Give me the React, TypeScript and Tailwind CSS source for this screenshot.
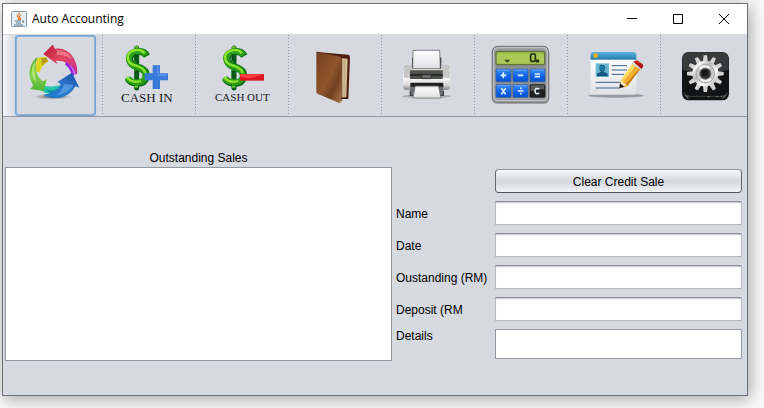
import type { ReactNode } from "react";

function Icon({ viewBox, children }: { viewBox: string; children: ReactNode }) {
  return (
    <svg viewBox={viewBox} className="size-[81px] shrink-0" aria-hidden="true">
      {children}
    </svg>
  );
}

function RefreshIcon() {
  return (
    <Icon viewBox="45 105 243 243">
      <defs>
        <linearGradient id="ringRed" x1="0" y1="0" x2="1" y2="1">
          <stop offset="0" stopColor="#b8143a" />
          <stop offset=".5" stopColor="#e2485f" />
          <stop offset="1" stopColor="#c8309a" />
        </linearGradient>
        <linearGradient id="ringGreen" x1="0" y1="0" x2="0" y2="1">
          <stop offset="0" stopColor="#4fa32c" />
          <stop offset=".5" stopColor="#86d348" />
          <stop offset="1" stopColor="#52b53a" />
        </linearGradient>
        <linearGradient id="ringBlue" x1="1" y1="0" x2="0" y2="1">
          <stop offset="0" stopColor="#1b4aa6" />
          <stop offset=".5" stopColor="#2c78cf" />
          <stop offset="1" stopColor="#1d7cc8" />
        </linearGradient>
        <radialGradient id="ringShadow">
          <stop offset="0" stopColor="#333" stopOpacity=".9" />
          <stop offset="1" stopColor="#666" stopOpacity="0" />
        </radialGradient>
      </defs>
      <g transform="translate(72 120)">
        <ellipse cx="86" cy="170" rx="58" ry="9" fill="url(#ringShadow)" />
        <path d="M38 58Q50 48 68 52L70 66Q52 76 47 98L34 92Z" fill="#dcd51e" />
        <path d="M52 54L68 53L72 64Q60 68 54 78Z" fill="#b99a14" />
        <path d="M124 64Q150 68 160 98L143 110Q142 88 124 74Z" fill="#9a22dc" />
        <path d="M134 72Q148 80 156 100L150 104Q146 86 134 72Z" fill="#c56af0" />
        <path d="M54 134Q74 144 106 136L106 160Q70 170 48 148Z" fill="#22c7ae" />
        <path d="M64 148Q84 156 106 144L106 160Q80 166 64 148Z" fill="#0f8f9c" />
        <path d="M86 14L93 26Q126 22 145 48Q160 70 160 96L157 105Q150 78 130 69Q112 61 96 62L100 73L58 42Z" fill="url(#ringRed)" />
        <path d="M98 29Q128 28 146 60Q124 42 98 46Z" fill="#f290a0" opacity=".65" />
        <path d="M42 50Q32 66 36 90Q40 112 56 124L68 118L60 153L18 147L28 137Q10 108 19 82Q26 60 42 50Z" fill="url(#ringGreen)" />
        <path d="M34 62Q18 84 27 114L38 128Q27 98 34 62Z" fill="#c4f48a" opacity=".75" />
        <path d="M144 98L166 143L154 139Q138 170 102 174Q76 175 58 164Q88 160 100 146Q108 138 110 132L100 126Z" fill="url(#ringBlue)" />
        <path d="M120 132L149 134Q134 160 96 167Q116 152 120 132Z" fill="#6db4f0" opacity=".5" />
      </g>
    </Icon>
  );
}

function DollarShape() {
  return (
    <>
      <path d="M37 6V126" stroke="#0a5c1c" strokeWidth="15" strokeLinecap="round" fill="none" />
      <path d="M32 8V124" stroke="#4fc423" strokeWidth="4" fill="none" />
      <path d="M68 30Q58 13 38 17Q12 24 17 44Q21 58 42 64Q70 73 65 95Q60 113 39 112Q18 111 11 98" fill="none" stroke="#0c6a1a" strokeWidth="21" />
      <path d="M65 28Q56 12 36 16Q9 23 14 43Q18 58 39 63Q67 72 63 93Q58 110 37 109Q16 108 9 95" fill="none" stroke="#2ba017" strokeWidth="17" />
      <path d="M61 22Q51 9 34 12Q5 19 11 41Q16 56 38 60Q60 67 63 82M50 105Q22 113 7 93" fill="none" stroke="#8be22f" strokeWidth="7" />
      <path d="M31 3H42M31 122H41" stroke="#79d827" strokeWidth="5" fill="none" />
      <path d="M33 24V45M33 74V98" stroke="#075415" strokeWidth="6" />
    </>
  );
}

function CashInIcon() {
  return (
    <Icon viewBox="324 105 243 243">
      <g transform="translate(373 138)">
        <DollarShape />
      </g>
      <path d="M458 196H480V220H504V241H480V267H458V241H434V220H458Z" fill="#3979d8" />
      <path d="M461 199H477V223H501V229H471V199Z" fill="#73a8f1" opacity=".5" />
      <text x="363" y="307" fontSize="39" fill="#17191d" className="font-['Liberation_Serif',serif]">CASH IN</text>
    </Icon>
  );
}

function CashOutIcon() {
  return (
    <Icon viewBox="33 15 243 243">
      <g transform="translate(95 48)">
        <DollarShape />
      </g>
      <path d="M150 132H222V152H150Z" fill="#de1820" />
      <path d="M151 133H221L178 145L151 140Z" fill="#ff5450" opacity=".7" />
      <text x="75" y="212" fontSize="33" fill="#17191d" className="font-['Liberation_Serif',serif]">CASH OUT</text>
    </Icon>
  );
}

function BookIcon() {
  return (
    <Icon viewBox="312 15 243 243">
      <defs>
        <linearGradient id="bookCover" x1="0" y1="0" x2="1" y2="1">
          <stop offset="0" stopColor="#75401f" />
          <stop offset=".5" stopColor="#91552d" />
          <stop offset=".7" stopColor="#70401f" />
          <stop offset="1" stopColor="#b1764c" />
        </linearGradient>
      </defs>
      <path d="M379 66L474 74Q480 75 480 82L475 207L453 207L440 80Z" fill="#4e1e0d" />
      <path d="M449 84L473 86L469 201L450 203Z" fill="#d4c197" />
      <path d="M458 86V201M464 87V200" stroke="#b79e70" strokeWidth="2" />
      <path d="M379 66L449 79Q455 80 455 88L453 215Q452 220 446 218L384 192Q379 190 379 185Z" fill="url(#bookCover)" />
      <path d="M380 66L450 79Q455 81 455 88V214" fill="none" stroke="#532713" strokeWidth="2" />
    </Icon>
  );
}

function PrinterIcon() {
  return (
    <Icon viewBox="51 15 243 243">
      <defs>
        <linearGradient id="printerBody" x1="0" y1="0" x2="0" y2="1">
          <stop offset="0" stopColor="#b4b4b4" />
          <stop offset=".35" stopColor="#f5f5f5" />
          <stop offset=".75" stopColor="#e5e5e5" />
          <stop offset="1" stopColor="#888" />
        </linearGradient>
        <linearGradient id="printerPaper" x1="0" y1="0" x2="0" y2="1">
          <stop offset="0" stopColor="#fff" />
          <stop offset="1" stopColor="#dfe0e3" />
        </linearGradient>
      </defs>
      <ellipse cx="170" cy="199" rx="74" ry="6" fill="#73777e" opacity=".45" />
      <path d="M126 83H214V118H126Z" fill="#414141" />
      <path d="M129 61H209L211 116H128Z" fill="url(#printerPaper)" stroke="#4c4c4c" strokeWidth="2" />
      <path d="M108 106H125V116H214V106H231Q240 108 240 119V174Q239 180 230 180H109Q99 179 99 171V119Q99 109 108 106Z" fill="url(#printerBody)" />
      <path d="M101 127L112 106H123V144H101ZM216 106H229L239 127V144H216Z" fill="#c6c6c6" />
      <path d="M99 143H240V151H99Z" fill="#f5f5f5" />
      <path d="M120 121H218V147H120Z" fill="#4d504d" />
      <path d="M120 132H218V138H120Z" fill="#252825" />
      <path d="M155 134H183V146H155Z" fill="#6a6d69" stroke="#242424" strokeWidth="2" />
      <path d="M121 158H220V172H121Z" fill="#202020" />
      <path d="M121 170H136L129 198H121ZM205 170H220V198H212Z" fill="#6b6e72" />
      <path d="M136 168H205L213 204H129Z" fill="url(#printerPaper)" stroke="#606060" strokeWidth="2" />
      <path d="M138 170H203" stroke="#a5a5a5" strokeWidth="3" />
      <path d="M121 182V196H130M220 182V196H211" stroke="#444" strokeWidth="4" fill="none" />
      <circle cx="232" cy="157" r="4" fill="#fff" stroke="#bbb" strokeWidth="2" />
    </Icon>
  );
}

function CalculatorIcon() {
  return (
    <Icon viewBox="330 15 243 243">
      <defs>
        <linearGradient id="calcKey" x1="0" y1="0" x2="0" y2="1">
          <stop offset="0" stopColor="#3f91ff" />
          <stop offset=".5" stopColor="#1467eb" />
          <stop offset="1" stopColor="#0552d4" />
        </linearGradient>
        <linearGradient id="calcScreen" x1="0" y1="0" x2="0" y2="1">
          <stop offset="0" stopColor="#88aa3e" />
          <stop offset=".5" stopColor="#b4d364" />
          <stop offset="1" stopColor="#9dbe50" />
        </linearGradient>
      </defs>
      <rect x="365" y="51" width="173" height="171" rx="16" fill="#707276" opacity=".5" />
      <rect x="367" y="49" width="169" height="168" rx="15" fill="#9c9ea1" stroke="#717376" strokeWidth="3" />
      <rect x="371" y="53" width="161" height="159" rx="11" fill="none" stroke="#c7c9cb" strokeWidth="3" />
      <rect x="376" y="62" width="151" height="142" rx="8" fill="#8b8f93" />
      <rect x="378" y="64" width="146" height="40" rx="5" fill="url(#calcScreen)" stroke="#65743d" strokeWidth="4" />
      <path d="M385 70H518V97H385Z" fill="#aaca57" />
      <path d="M403 89H421L412 98Z" fill="#344117" />
      <path d="M484 72H494L496 75V91L493 94H484L482 91V75ZM500 91H505V95H500Z" fill="none" stroke="#243210" strokeWidth="5" />
      {[
        [378, 117],
        [429, 117],
        [480, 117],
        [378, 164],
        [429, 164],
      ].map(([x, y]) => (
        <g key={`${x}-${y}`}>
          <rect x={x} y={y} width="45" height="38" rx="3" fill="url(#calcKey)" stroke="#315b9b" strokeWidth="2" />
          <path d={`M${x + 3} ${y + 3}H${x + 41}`} stroke="#74b2ff" strokeWidth="2" />
        </g>
      ))}
      <rect x="480" y="164" width="45" height="38" rx="3" fill="#222" stroke="#111" strokeWidth="2" />
      <path d="M482 166H523V178Q500 176 482 184Z" fill="#5d5d5d" />
      <g fill="none" stroke="#e1f0ff" strokeWidth="5">
        <path d="M392 136H409M400 127V145M443 136H460M494 132H510M494 140H510" />
        <path d="M394 175L407 193M407 175L394 193M443 183H461M450 175H455M450 191H455" />
        <path d="M508 177Q496 172 495 183Q496 194 508 190" />
      </g>
    </Icon>
  );
}

function EditIcon() {
  return (
    <Icon viewBox="39 105 243 243">
      <defs>
        <linearGradient id="cardBar" x1="0" y1="0" x2="0" y2="1">
          <stop offset="0" stopColor="#5cb4de" />
          <stop offset="1" stopColor="#2381b1" />
        </linearGradient>
        <linearGradient id="cardFace" x1="0" y1="0" x2="0" y2="1">
          <stop offset="0" stopColor="#fff" />
          <stop offset="1" stopColor="#dfe1e5" />
        </linearGradient>
      </defs>
      <ellipse cx="168" cy="287" rx="84" ry="6" fill="#777e88" opacity=".7" />
      <path d="M92 174H229V277Q229 284 221 284H99Q91 284 91 276Z" fill="url(#cardFace)" />
      <path d="M92 178V166Q92 156 102 156H219Q229 156 229 166V178Z" fill="url(#cardBar)" />
      <path d="M92 178H229" stroke="#226f9b" strokeWidth="2" />
      <circle cx="107" cy="167" r="7" fill="#ffad10" />
      <path d="M107 190H147V231H107Z" fill="#73c3d2" />
      <path d="M109 192H145V229H109Z" fill="#68b5cf" />
      <path d="M118 201Q120 192 129 195Q139 198 135 209L131 215L143 221V229H111V221L123 215Q117 210 118 201Z" fill="#145681" />
      <path d="M119 201Q127 192 135 205Q132 215 127 214Q120 211 119 201Z" fill="#227ca8" />
      <path d="M155 197H201M155 210H201M155 223H192M107 247H186M107 264H180" stroke="#385f89" strokeWidth="3" />
      <path d="M223 183L247 199L200 260L178 265L183 241Z" fill="#f0af2f" />
      <path d="M219 188L229 195L187 248L183 241Z" fill="#ffda66" />
      <path d="M240 204L248 198L202 258L197 253Z" fill="#c97c12" />
      <path d="M183 241L200 255L178 265Z" fill="#f7dfae" />
      <path d="M180 250L193 260L178 265Z" fill="#17191b" />
      <path d="M216 190L222 182L249 201L242 210Z" fill="#e4e5e8" stroke="#949aa2" strokeWidth="1" />
      <path d="M221 186L226 182Q230 179 234 183L248 193Q252 197 248 202L244 207Z" fill="#a90e12" />
      <path d="M226 186L231 182L246 193Z" fill="#de2822" />
    </Icon>
  );
}

function SettingsIcon() {
  return (
    <Icon viewBox="318 105 243 243">
      <defs>
        <linearGradient id="gearMetal" x1="0" y1="0" x2="1" y2="1">
          <stop offset="0" stopColor="#b5b5b5" />
          <stop offset=".2" stopColor="#f2f2f2" />
          <stop offset=".4" stopColor="#b9b9b9" />
          <stop offset=".65" stopColor="#fff" />
          <stop offset="1" stopColor="#999" />
        </linearGradient>
      </defs>
      <rect x="366" y="156" width="141" height="145" rx="20" fill="#121315" />
      <path d="M367 209V176Q368 157 388 157H485Q505 158 506 178V209Q436 231 367 209Z" fill="#393a3b" />
      <path d="M368 276Q377 289 390 289H482Q499 288 505 276" fill="none" stroke="#555" strokeWidth="2" />
      <path d="M370 282L385 297V290ZM503 282L488 297V290Z" fill="#aaa" opacity=".6" />
      <g fill="url(#gearMetal)">
        {Array.from({ length: 12 }, (_, tooth) => (
          <path key={tooth} d="M428 190L431 166H441L444 190Z" fill="#d4d4d4" transform={`rotate(${tooth * 30} 436 221)`} />
        ))}
        <circle cx="436" cy="221" r="39" />
      </g>
      <circle cx="436" cy="221" r="28" fill="#c8c8c8" stroke="#949494" strokeWidth="2" />
      <path d="M416 203Q430 190 450 201L439 217ZM455 239Q439 252 420 240L436 226Z" fill="#f4f4f4" />
      <circle cx="436" cy="221" r="17" fill="#303030" stroke="#858585" strokeWidth="3" />
      <circle cx="434" cy="218" r="10" fill="#171717" />
      <path d="M443 290H448M468 290H473M482 290H486" stroke="#aaa" strokeWidth="2" />
    </Icon>
  );
}

const tools = [
  { name: "Refresh", icon: <RefreshIcon /> },
  { name: "Cash in", icon: <CashInIcon /> },
  { name: "Cash out", icon: <CashOutIcon /> },
  { name: "Ledger", icon: <BookIcon /> },
  { name: "Print", icon: <PrinterIcon /> },
  { name: "Calculator", icon: <CalculatorIcon /> },
  { name: "Edit record", icon: <EditIcon /> },
  { name: "Settings", icon: <SettingsIcon /> },
];

const fields = [
  { id: "name", label: "Name" },
  { id: "date", label: "Date" },
  { id: "outstanding", label: "Oustanding (RM)" },
  { id: "deposit", label: "Deposit (RM" },
];

function TitleBar() {
  return (
    <header className="flex h-[30px] items-center bg-white pl-2">
      <svg viewBox="0 0 16 16" className="size-4" aria-hidden="true">
        <rect x=".5" y=".5" width="15" height="15" rx="1" fill="#e9eef2" stroke="#8398a8" />
        <path d="M9 2Q5 5 7 6T7 9M10 4Q7 6 9 7T8 9" fill="none" stroke="#e37a28" strokeWidth="1.2" />
        <path d="M4 10H10M5 12H10M3 14H12M11 10Q14 9 12 12" fill="none" stroke="#587890" />
      </svg>
      <h1 className="ml-[5px] flex-1 font-['Open_Sans','Noto_Sans',sans-serif] text-xs leading-4 text-black">Auto Accounting</h1>
      <div className="flex h-full">
        <button aria-label="Minimize" className="flex w-[46px] items-center justify-center">
          <svg viewBox="0 0 10 10" className="size-[10px]"><path d="M0 4.5H10" stroke="#000" /></svg>
        </button>
        <button aria-label="Maximize" className="flex w-[46px] items-center justify-center">
          <svg viewBox="0 0 10 10" className="size-[10px]"><path d="M.5 .5H9.5V9.5H.5Z" fill="none" stroke="#000" /></svg>
        </button>
        <button aria-label="Close" className="flex w-[46px] items-center justify-center">
          <svg viewBox="0 0 10 10" className="size-[10px]"><path d="M0 0L10 10M10 0L0 10" stroke="#000" /></svg>
        </button>
      </div>
    </header>
  );
}

function ToolBar() {
  return (
    <div role="toolbar" aria-label="Main" className="flex border-b border-[#9297a1] pt-px">
      <div className="w-3 shrink-0 bg-linear-to-r from-[#f5f6f8] to-[#d6d9e0]" />
      {tools.map((tool, index) => (
        <div key={tool.name} className={index === 0 ? "flex flex-1" : "flex grow-1 basis-3"}>
          {index > 0 && (
            <div className="flex w-3 shrink-0 justify-center">
              <div className="w-px bg-[repeating-linear-gradient(to_bottom,#9297a1_0_1px,transparent_1px_3px)]" />
            </div>
          )}
          <button
            aria-label={tool.name}
            className={
              index === 0
                ? "flex h-[81px] flex-1 items-center justify-center rounded-[4px] shadow-[inset_0_0_0_1px_#73a4d1,inset_0_0_0_2px_#8fb4d6]"
                : "flex h-[81px] flex-1 items-center justify-center"
            }
          >
            {tool.icon}
          </button>
        </div>
      ))}
    </div>
  );
}

export default function App() {
  return (
    <div className="min-h-screen bg-[#fafafa] pt-[3px] pr-4 pb-3 pl-0.5 font-['Liberation_Sans',Arial,sans-serif] text-xs leading-4 text-black">
      <div className="border border-[#6c6f75] bg-[#d6d9e0] shadow-[2px_3px_16px_rgba(0,0,0,0.35)]">
        <TitleBar />
        <ToolBar />
        <main className="flex gap-1 pt-[33px] pr-[5px] pb-[34px] pl-0.5">
          <section className="flex min-w-0 flex-1 flex-col">
            <label htmlFor="sales" className="pb-px text-center">Outstanding Sales</label>
            <textarea id="sales" readOnly className="block min-h-[194px] w-full flex-1 resize-none border border-[#9297a1] bg-white outline-none" />
          </section>
          <form className="grid w-[346px] grid-cols-[95px_1fr] gap-x-1 gap-y-2 pt-[19px] pb-0.5">
            <button type="button" className="col-start-2 h-6 rounded-[4px] border border-t-[#8d9097] border-r-[#62666d] border-b-[#4e525a] border-l-[#62666d] bg-linear-to-b from-[#f8f8fa] via-[#d5d8df] to-[#f0f2f6] pt-0.5">
              Clear Credit Sale
            </button>
            {fields.map((field) => (
              <div key={field.id} className="col-span-2 grid grid-cols-subgrid items-center">
                <label htmlFor={field.id} className="pt-0.5 leading-[14px] whitespace-nowrap">{field.label}</label>
                <input id={field.id} type="text" className="h-6 w-full min-w-0 border border-[#b8babf] border-t-[#8d8f94] bg-white px-1 shadow-[inset_0_1px_1px_#c8cacf] outline-none" />
              </div>
            ))}
            <label htmlFor="details" className="leading-[14px]">Details</label>
            <textarea id="details" className="block h-[30px] w-full resize-none border border-[#9297a1] bg-white px-1 outline-none" />
          </form>
        </main>
      </div>
    </div>
  );
}
